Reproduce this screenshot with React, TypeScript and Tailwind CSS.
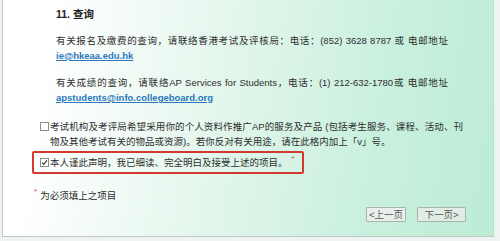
import React from 'react';

function Box({ checked }: { checked?: boolean }) {
  return (
    <span className="w-[9px] h-[9px] border border-[#8a8f8c] bg-white flex items-center justify-center shrink-0">
      {checked && (
        <svg width="7" height="7" viewBox="0 0 7 7">
          <path d="M1 3.6 L2.8 5.4 L6 1.4" fill="none" stroke="#333" strokeWidth="1.1" />
        </svg>
      )}
    </span>
  );
}

export default function App() {
  return (
    <div className="w-[500px] h-[241px] bg-[#eef4f1] font-['Liberation_Sans','Noto_Sans_CJK_SC',sans-serif] text-[9.5px] leading-[15px] text-[#2e2e2e]">
      <div className="ml-[2px] w-[492px] h-[237px] border-l border-b border-r border-l-[#c2c6c4] border-b-[#c2c6c4] border-r-[#b5e4cd] bg-[linear-gradient(100deg,#ffffff_10%,#e3f6ec_45%,#c9f0de_75%,#bcecd5_100%)] pt-[7px] pl-[29px]">
        <h3 className="ml-[24px] text-[10.5px] font-bold text-[#222]">11. 查询</h3>

        <div className="ml-[24px] w-[392px] mt-[11px]">
          <div className="[text-align-last:justify]">有关报名及缴费的查询，请联络香港考试及评核局：电话：(852) 3628 8787 或 电邮地址</div>
          <a className="text-[#2a78bd] underline font-bold">ie@hkeaa.edu.hk</a>
        </div>

        <div className="ml-[24px] w-[392px] mt-[12px]">
          <div className="[text-align-last:justify]">有关成绩的查询，请联络AP Services for Students，电话：(1) 212-632-1780或 电邮地址</div>
          <a className="text-[#2a78bd] underline font-bold">apstudents@info.collegeboard.org</a>
        </div>

        <div className="flex items-start ml-[8px] mt-[14px]">
          <span className="mt-[3px] mr-[1px]"><Box /></span>
          <div className="w-[413px]">
            <div className="[text-align-last:justify]">考试机构及考评局希望采用你的个人资料作推广AP的服务及产品 (包括考生服务、课程、活动、刊</div>
            <div>物及其他考试有关的物品或资源)。若你反对有关用途，请在此格内加上「v」号。</div>
          </div>
        </div>

        <div className="mt-[2px] w-[272px] h-[23px] border-2 border-[#d23a30] rounded-[2px] flex items-center pl-[6px]">
          <span className="mr-[1px]"><Box checked /></span>
          <span>本人谨此声明，我已细读、完全明白及接受上述的项目。</span>
          <span className="text-[#e0443a] text-[8px] ml-[4px] -mt-[8px]">*</span>
        </div>

        <div className="mt-[14px] ml-[2px] flex items-start">
          <span className="text-[#e0443a] text-[8px] leading-[8px] mr-[3px]">*</span>
          <span>为必须填上之项目</span>
        </div>

        <div className="mt-[4px] flex justify-end pr-[27px] gap-[11px] text-[9.5px] text-[#555]">
          <button className="w-[40px] h-[15px] leading-[13px] border border-[#a9b3ad] bg-[#e9efeb] rounded-[1px]">&lt;上一页</button>
          <button className="w-[49px] h-[15px] leading-[13px] border border-[#a9b3ad] bg-[#e2ece7] rounded-[1px]">下一页&gt;</button>
        </div>
      </div>
    </div>
  );
}
